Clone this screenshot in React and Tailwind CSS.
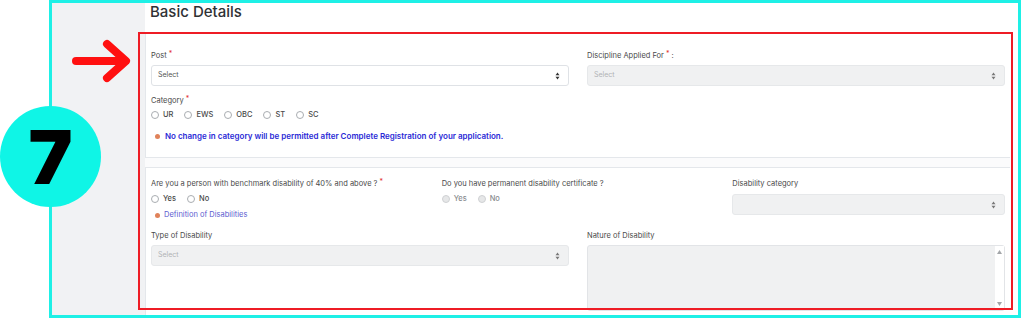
import React from 'react';

const SortIcon = ({ muted = false }) => (
  <svg width="5" height="8" viewBox="0 0 5 8" className={muted ? 'text-[#777]' : 'text-[#333]'}>
    <path d="M2.5 0.5 L4.5 3.2 L0.5 3.2 Z" fill="currentColor" />
    <path d="M2.5 7.5 L4.5 4.8 L0.5 4.8 Z" fill="currentColor" />
  </svg>
);

const Label = ({ text, required = false, suffix = '' }) => (
  <div className="h-[10px] leading-[10px] text-[7.5px] text-[#4a4a4a] whitespace-nowrap">
    {text}
    {required && <span className="text-[#e3342f] text-[7px] relative -top-[2px] ml-[2px]">*</span>}
    {suffix}
  </div>
);

const SelectBox = ({ disabled = false, placeholder = 'Select' }) => (
  <div
    className={`h-[21px] rounded-[3px] border flex items-center justify-between pl-[6px] pr-[8px] ${
      disabled ? 'bg-[#f0f1f2] border-[#e6e8ea]' : 'bg-white border-[#dfe2e6]'
    }`}
  >
    <span className={`text-[7px] ${disabled ? 'text-[#b0b3b6]' : 'text-[#555]'}`}>{placeholder}</span>
    <SortIcon muted={disabled} />
  </div>
);

const Radio = ({ label, disabled = false }) => (
  <div className="flex items-center gap-[4px]">
    <span
      className={`w-[8px] h-[8px] rounded-full border ${
        disabled ? 'bg-[#e6e7e8] border-[#cfd1d3]' : 'bg-white border-[#a9adb1]'
      }`}
    />
    <span className={`text-[7.5px] leading-[10px] font-medium ${disabled ? 'text-[#8a8d90]' : 'text-[#4a4a4a]'}`}>
      {label}
    </span>
  </div>
);

const Dot = () => <span className="w-[5px] h-[5px] rounded-full bg-[#e0825a] ml-[4px]" />;

export default function App() {
  return (
    <div className="relative w-[1024px] h-[319px] bg-white overflow-hidden font-['Inter',_'Liberation_Sans',_sans-serif]">
      {/* cyan frame */}
      <div className="ml-[49px] w-[972px] h-[318px] border-[3px] border-[#1ef0e6] flex overflow-hidden">
        <div className="w-[93px] bg-[#f1f2f4]" />
        <div className="flex-1 bg-white pr-[8px] flex flex-col">
          <div className="h-[31px] pl-[5px] text-[15px] leading-[18px] font-medium text-[#2f3134]">Basic Details</div>

          {/* card 1 */}
          <div className="border-l border-b border-[#e4e7eb] pl-[5px] pr-[5px] pt-[17px] pb-[16px] grid grid-cols-2 gap-x-[18px]">
            <div className="flex flex-col">
              <Label text="Post" required />
              <div className="mt-[4px]">
                <SelectBox />
              </div>
              <div className="mt-[10px]">
                <Label text="Category" required />
              </div>
              <div className="mt-[4px] flex items-center gap-x-[11px]">
                <Radio label="UR" />
                <Radio label="EWS" />
                <Radio label="OBC" />
                <Radio label="ST" />
                <Radio label="SC" />
              </div>
              <div className="mt-[11px] h-[10px] flex items-center gap-[5px]">
                <Dot />
                <span className="text-[8px] font-semibold text-[#2a2ad6] whitespace-nowrap">
                  No change in category will be permitted after Complete Registration of your application.
                </span>
              </div>
            </div>
            <div className="flex flex-col">
              <Label text="Discipline Applied For" required suffix=" :" />
              <div className="mt-[4px]">
                <SelectBox disabled />
              </div>
            </div>
          </div>

          <div className="h-[9px] bg-[#fbfbfc]" />

          {/* card 2 */}
          <div className="flex-1 border-l border-t border-[#e4e7eb] pl-[5px] pr-[5px] pt-[11px]">
            <div className="grid grid-cols-3 gap-x-[18px]">
              <div className="flex flex-col">
                <Label text="Are you a person with benchmark disability of 40% and above ?" required />
                <div className="mt-[5px] flex items-center gap-x-[11px]">
                  <Radio label="Yes" />
                  <Radio label="No" />
                </div>
                <div className="mt-[6px] h-[10px] flex items-center gap-[4px]">
                  <Dot />
                  <span className="text-[7.5px] text-[#5b5bd0] whitespace-nowrap">Definition of Disabilities</span>
                </div>
              </div>
              <div className="flex flex-col">
                <Label text="Do you have permanent disability certificate ?" />
                <div className="mt-[5px] flex items-center gap-x-[11px]">
                  <Radio label="Yes" disabled />
                  <Radio label="No" disabled />
                </div>
              </div>
              <div className="flex flex-col">
                <Label text="Disability category" />
                <div className="mt-[5px]">
                  <SelectBox disabled placeholder="" />
                </div>
              </div>
            </div>

            <div className="mt-[11px] grid grid-cols-2 gap-x-[18px]">
              <div className="flex flex-col">
                <Label text="Type of Disability" />
                <div className="mt-[4px]">
                  <SelectBox disabled />
                </div>
              </div>
              <div className="flex flex-col">
                <Label text="Nature of Disability" />
                <div className="mt-[4px] h-[66px] rounded-[3px] border border-[#e2e4e7] bg-[#f0f1f2] flex justify-end">
                  <div className="w-[9px] bg-white flex flex-col items-center justify-between py-[4px]">
                    <svg width="5" height="4" viewBox="0 0 5 4">
                      <path d="M2.5 0 L5 4 L0 4 Z" fill="#a3a6a9" />
                    </svg>
                    <svg width="5" height="4" viewBox="0 0 5 4">
                      <path d="M2.5 4 L5 0 L0 0 Z" fill="#a3a6a9" />
                    </svg>
                  </div>
                </div>
              </div>
            </div>
          </div>
        </div>
      </div>

      {/* annotation: red highlight box */}
      <div className="absolute left-[138px] top-[32px] w-[875px] h-[278px] border-2 border-[#ee1c25]" />

      {/* annotation: red arrow */}
      <svg className="absolute left-[70px] top-[38px]" width="64" height="48" viewBox="0 0 64 48">
        <path d="M6 23 L54 23" stroke="#ff1010" strokeWidth="8" strokeLinecap="round" fill="none" />
        <path d="M37 6 L56 23 L37 40" stroke="#ff1010" strokeWidth="8" strokeLinecap="round" strokeLinejoin="round" fill="none" />
      </svg>

      {/* annotation: step number */}
      <div className="absolute left-0 top-[106px] w-[101px] h-[101px] rounded-full bg-[#0ff5e6] flex items-center justify-center">
        <span className="text-[74px] leading-none font-black text-black font-['Inter',_sans-serif]">7</span>
      </div>
    </div>
  );
}
